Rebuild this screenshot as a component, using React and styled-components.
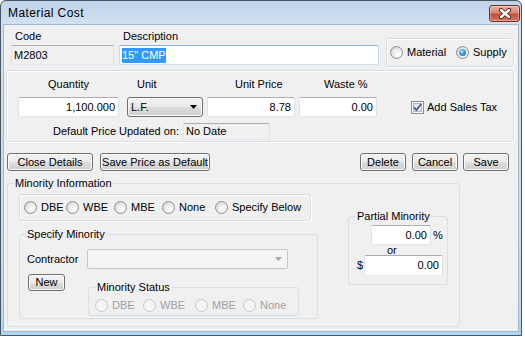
import React from 'react'
import styled, { createGlobalStyle } from 'styled-components'

const GlobalStyle = createGlobalStyle`
  html, body { margin: 0; padding: 0; background: #ffffff; }
  body {
    font-family: 'Liberation Sans', Arial, sans-serif;
    font-size: 11px;
    color: #000;
  }
  * { box-sizing: border-box; }
`

const Window = styled.div`
  width: 522px;
  height: 336px;
  border: 1px solid #4a5462;
  border-radius: 6px 6px 0 0;
  background: linear-gradient(to bottom, #bfd3ea 0px, #d3e1f2 24px, #c4d9ee 300px, #a9d6f0 100%);
  display: flex;
  flex-direction: column;
  overflow: hidden;
`

const TitleBar = styled.div`
  height: 24px;
  flex: none;
  display: flex;
  align-items: flex-start;
  justify-content: space-between;
  padding: 0 1px 0 7px;
`

const TitleText = styled.span`
  font-size: 12px;
  letter-spacing: 0.4px;
  line-height: 15px;
  margin-top: 5px;
`

const CloseButton = styled.div`
  width: 31px;
  height: 17px;
  margin-top: 4px;
  border: 1px solid #6a3028;
  border-radius: 3px;
  background: linear-gradient(to bottom, #eab0a4 0%, #d98572 45%, #c5503a 55%, #d6735d 100%);
  box-shadow: inset 0 0 0 1px rgba(255, 255, 255, 0.35);
  display: flex;
  align-items: center;
  justify-content: center;
`

const Client = styled.div`
  margin: 0 3px;
  height: 306px;
  flex: none;
  background: #f0f0f0;
  box-shadow: 0 0 0 1px #a5b7cc;
  display: flex;
  flex-direction: column;
`

const Row = styled.div`
  display: flex;
  align-items: ${p => p.$align || 'flex-start'};
  justify-content: ${p => p.$justify || 'flex-start'};
  margin-top: ${p => p.$mt || 0}px;
  padding: ${p => p.$pad || '0'};
  height: ${p => (p.$h ? `${p.$h}px` : 'auto')};
`

const Column = styled.div`
  display: flex;
  flex-direction: column;
  flex: none;
  width: ${p => p.$w}px;
  margin-left: ${p => p.$ml || 0}px;
  margin-top: ${p => p.$mt || 0}px;
`

const Label = styled.div`
  height: 13px;
  line-height: 13px;
  white-space: nowrap;
  padding-left: ${p => p.$pl || 0}px;
  margin-bottom: ${p => (p.$mb === undefined ? 2 : p.$mb)}px;
  width: ${p => (p.$w ? `${p.$w}px` : 'auto')};
  margin-left: ${p => p.$ml || 0}px;
  text-align: ${p => (p.$right ? 'right' : 'left')};
  flex: none;
`

const TextBox = styled.div`
  width: ${p => (p.$w ? `${p.$w}px` : 'auto')};
  height: ${p => p.$h || 20}px;
  margin-left: ${p => p.$ml || 0}px;
  flex: none;
  border: 1px solid;
  border-color: ${p => (p.$focus ? '#8fb2d8 #c5d8ec #cfdff0 #c5d8ec' : '#abadb3 #dbdfe6 #e3e9ef #e2e3ea')};
  border-radius: 2px;
  background: ${p => (p.$readOnly ? '#f0f0f0' : '#ffffff')};
  display: flex;
  align-items: center;
  justify-content: ${p => (p.$right ? 'flex-end' : 'flex-start')};
  padding: 0 3px 0 2px;
  line-height: 13px;
  white-space: nowrap;
`

const Selection = styled.span`
  background: #3399ff;
  color: #ffffff;
  padding: 1px 0;
`

const Frame = styled.div`
  flex: none;
  width: ${p => p.$w}px;
  height: ${p => p.$h}px;
  margin-left: ${p => p.$ml || 0}px;
  margin-top: ${p => p.$mt || 0}px;
  padding: ${p => p.$pad || '0'};
  border: 1px solid #d5dfe5;
  border-radius: 3px;
  box-shadow: inset 1px 1px 0 #ffffff, 1px 1px 0 #ffffff;
  display: flex;
  flex-direction: ${p => (p.$column ? 'column' : 'row')};
  align-items: ${p => (p.$column ? 'stretch' : 'center')};
`

const GroupBox = styled.fieldset`
  flex: none;
  min-width: 0;
  margin: ${p => p.$mt || 0}px 0 0 ${p => p.$ml || 0}px;
  padding: 0 0 ${p => p.$pb || 0}px 0;
  width: ${p => p.$w}px;
  border: 1px solid #d5dfe5;
  border-radius: 3px;
`

const Legend = styled.legend`
  margin-left: ${p => p.$ml || 0}px;
  padding: 0 1px;
  height: 13px;
  line-height: 13px;
  background: #f0f0f0;
  white-space: nowrap;
`

const RadioItem = styled.div`
  display: flex;
  align-items: center;
  gap: 4px;
  flex: none;
  width: ${p => (p.$w ? `${p.$w}px` : 'auto')};
  color: ${p => (p.$disabled ? '#a0a0a0' : '#000')};
  line-height: 13px;
  white-space: nowrap;
`

const RadioCircle = styled.span`
  width: 13px;
  height: 13px;
  flex: none;
  border-radius: 50%;
  border: 1px solid ${p => (p.$disabled ? '#c8c8c8' : '#8e8f8f')};
  background: ${p =>
    p.$disabled
      ? '#f4f4f4'
      : 'radial-gradient(circle at 65% 65%, #ffffff 0%, #ececec 45%, #c9c9c9 100%)'};
  display: flex;
  align-items: center;
  justify-content: center;

  &::after {
    content: '';
    display: ${p => (p.$checked ? 'block' : 'none')};
    width: 7px;
    height: 7px;
    border-radius: 50%;
    background: radial-gradient(circle at 40% 35%, #b5e7fc 0%, #3e9ce2 45%, #17579e 100%);
  }
`

const RadioRow = styled.div`
  display: flex;
  align-items: center;
  height: ${p => p.$h || 13}px;
  margin-top: ${p => p.$mt || 0}px;
  padding-left: ${p => p.$pl || 0}px;
`

const CheckItem = styled.div`
  display: flex;
  align-items: center;
  gap: 3px;
  height: 20px;
  margin-left: ${p => p.$ml || 0}px;
  white-space: nowrap;
`

const Button = styled.div`
  flex: none;
  width: ${p => p.$w}px;
  height: ${p => p.$h || 18}px;
  margin-left: ${p => p.$ml || 0}px;
  border: 1px solid #707070;
  border-radius: 3px;
  background: linear-gradient(to bottom, #f2f2f2 0%, #ebebeb 50%, #dddddd 51%, #cfcfcf 100%);
  box-shadow: inset 0 0 0 1px #fcfcfc;
  display: flex;
  align-items: center;
  justify-content: center;
  line-height: 13px;
  white-space: nowrap;
`

const Combo = styled.div`
  flex: none;
  width: ${p => p.$w}px;
  height: 20px;
  margin-left: ${p => p.$ml || 0}px;
  border: 1px solid ${p => (p.$disabled ? '#c3c7ca' : '#707070')};
  border-radius: ${p => (p.$disabled ? 2 : 3)}px;
  background: ${p =>
    p.$disabled
      ? '#f4f4f4'
      : 'linear-gradient(to bottom, #f2f2f2 0%, #ebebeb 50%, #dddddd 51%, #cfcfcf 100%)'};
  box-shadow: ${p => (p.$disabled ? 'none' : 'inset 0 0 0 1px #fcfcfc')};
  display: flex;
  align-items: center;
  justify-content: space-between;
  padding: 0 5px 0 3px;
  line-height: 13px;
`

const SmallText = styled.span`
  line-height: ${p => p.$lh || 13}px;
  height: ${p => p.$lh || 13}px;
  width: ${p => (p.$w ? `${p.$w}px` : 'auto')};
  margin-left: ${p => p.$ml || 0}px;
  padding-left: ${p => p.$pl || 0}px;
  display: block;
  flex: none;
`

const CloseGlyph = () => (
  <svg width="14" height="11" viewBox="0 0 14 11">
    <path d="M3 2 L11 9 M11 2 L3 9" stroke="#4a1f18" strokeWidth="4.2" strokeLinecap="round" />
    <path d="M3 2 L11 9 M11 2 L3 9" stroke="#ffffff" strokeWidth="2.4" strokeLinecap="round" />
  </svg>
)

const Arrow = ({ color }) => (
  <svg width="7" height="4" viewBox="0 0 7 4">
    <path d="M0 0 H7 L3.5 4 Z" fill={color} />
  </svg>
)

const CheckMark = () => (
  <svg width="13" height="13" viewBox="0 0 13 13">
    <defs>
      <linearGradient id="cbfill" x1="0" y1="0" x2="1" y2="1">
        <stop offset="0" stopColor="#d6deea" />
        <stop offset="1" stopColor="#fbfcfe" />
      </linearGradient>
    </defs>
    <rect x="0.5" y="0.5" width="12" height="12" fill="#f6f6f6" stroke="#8e8f8f" />
    <rect x="2.5" y="2.5" width="8" height="8" fill="url(#cbfill)" stroke="#aeb6c4" />
    <path d="M3 6.4 L5.4 9 L10.2 3" fill="none" stroke="#4a5f97" strokeWidth="1.8" />
  </svg>
)

const Radio = ({ label, checked, disabled, w }) => (
  <RadioItem $w={w} $disabled={disabled}>
    <RadioCircle $checked={checked} $disabled={disabled} />
    <span>{label}</span>
  </RadioItem>
)

export default function App() {
  return (
    <>
      <GlobalStyle />
      <Window>
        <TitleBar>
          <TitleText>Material Cost</TitleText>
          <CloseButton>
            <CloseGlyph />
          </CloseButton>
        </TitleBar>

        <Client>
          <Row $pad="5px 0 0 7px">
            <Column $w={103}>
              <Label $pl={4}>Code</Label>
              <TextBox $readOnly>M2803</TextBox>
            </Column>
            <Column $w={260} $ml={5}>
              <Label $pl={4}>Description</Label>
              <TextBox $focus>
                <Selection>15" CMP</Selection>
              </TextBox>
            </Column>
            <Frame $w={128} $h={29} $ml={7} $mt={8} $pad="0 0 0 3px">
              <Radio label="Material" w={66} />
              <Radio label="Supply" checked />
            </Frame>
          </Row>

          <Frame $column $w={508} $h={72} $ml={2} $mt={3} $pad="7px 0 0 11px">
            <Row $align="flex-end">
              <Column $w={101}>
                <Label $pl={30} $mb={6}>Quantity</Label>
                <TextBox $right>1,100.000</TextBox>
              </Column>
              <Column $w={76} $ml={8}>
                <Label $pl={10} $mb={6}>Unit</Label>
                <Combo $w={76}>
                  <span>L.F.</span>
                  <Arrow color="#000" />
                </Combo>
              </Column>
              <Column $w={88} $ml={4}>
                <Label $pl={28} $mb={6}>Unit Price</Label>
                <TextBox $right>8.78</TextBox>
              </Column>
              <Column $w={78} $ml={4}>
                <Label $pl={25} $mb={6}>Waste %</Label>
                <TextBox $right>0.00</TextBox>
              </Column>
              <CheckItem $ml={34}>
                <CheckMark />
                <span>Add Sales Tax</span>
              </CheckItem>
            </Row>
            <Row $align="center" $mt={6} $h={17}>
              <Label $w={161} $right $mb={0}>Default Price Updated on:</Label>
              <TextBox $readOnly $w={87} $h={17} $ml={4}>No Date</TextBox>
            </Row>
          </Frame>

          <Row $justify="space-between" $mt={11} $pad="0 9px 0 3px">
            <Row>
              <Button $w={86}>Close Details</Button>
              <Button $w={110} $ml={7}>Save Price as Default</Button>
            </Row>
            <Row>
              <Button $w={46}>Delete</Button>
              <Button $w={46} $ml={6}>Cancel</Button>
              <Button $w={46} $ml={5}>Save</Button>
            </Row>
          </Row>

          <GroupBox $w={453} $ml={3} $mt={6} $pb={7}>
            <Legend $ml={6}>Minority Information</Legend>
            <Row $pad="0 0 0 11px">
              <Column $w={299}>
                <Frame $w={292} $h={27} $mt={4} $pad="0 0 0 4px">
                  <Radio label="DBE" w={42} />
                  <Radio label="WBE" w={48} />
                  <Radio label="MBE" w={48} />
                  <Radio label="None" w={53} />
                  <Radio label="Specify Below" />
                </Frame>

                <GroupBox $w={299} $mt={7} $pb={2}>
                  <Legend $ml={6}>Specify Minority</Legend>
                  <Row $align="center" $mt={8} $h={20}>
                    <Label $w={60} $ml={7} $mb={0}>Contractor</Label>
                    <Combo $w={201} $disabled>
                      <span />
                      <Arrow color="#a8a8a8" />
                    </Combo>
                  </Row>
                  <Row $mt={5}>
                    <Button $w={37} $h={17} $ml={8}>New</Button>
                    <GroupBox $w={211} $ml={23} $mt={7} $pb={3}>
                      <Legend $ml={7}>Minority Status</Legend>
                      <RadioRow $mt={5} $pl={6}>
                        <Radio label="DBE" w={48} disabled />
                        <Radio label="WBE" w={52} disabled />
                        <Radio label="MBE" w={48} disabled />
                        <Radio label="None" disabled />
                      </RadioRow>
                    </GroupBox>
                  </Row>
                </GroupBox>
              </Column>

              <GroupBox $w={100} $ml={30} $mt={20} $pb={8}>
                <Legend $ml={7}>Partial Minority</Legend>
                <Row $align="center" $mt={2} $pad="0 0 0 22px">
                  <TextBox $w={60} $right>0.00</TextBox>
                  <SmallText $ml={2}>%</SmallText>
                </Row>
                <SmallText $lh={10} $pl={38}>or</SmallText>
                <Row $align="center" $pad="0 0 0 8px">
                  <SmallText $w={7}>$</SmallText>
                  <TextBox $w={79} $h={21} $right>0.00</TextBox>
                </Row>
              </GroupBox>
            </Row>
          </GroupBox>
        </Client>
      </Window>
    </>
  )
}
